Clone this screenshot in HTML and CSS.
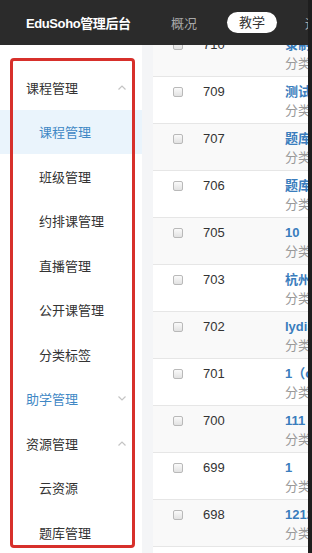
FILE: index.html
```html
<!DOCTYPE html>
<html lang="zh">
<head>
<meta charset="utf-8">
<link rel="stylesheet" href="styles.css">
</head>
<body>
<div class="app">
  <header class="topbar">
    <div class="brand">EduSoho管理后台</div>
    <nav class="nav">
      <span class="nav-item">概况</span>
      <span class="nav-item active">教学</span>
      <span class="nav-item">运营</span>
    </nav>
  </header>
  <div class="layout">
    <aside class="sidebar">
      <div class="group open">课程管理<svg class="chev" viewBox="0 0 8 5"><polyline points="0.5,4.5 4,1 7.5,4.5"/></svg></div>
      <div class="item active">课程管理</div>
      <div class="item">班级管理</div>
      <div class="item">约排课管理</div>
      <div class="item">直播管理</div>
      <div class="item">公开课管理</div>
      <div class="item">分类标签</div>
      <div class="group blue">助学管理<svg class="chev" viewBox="0 0 8 5"><polyline points="0.5,0.5 4,4 7.5,0.5"/></svg></div>
      <div class="group open">资源管理<svg class="chev" viewBox="0 0 8 5"><polyline points="0.5,4.5 4,1 7.5,4.5"/></svg></div>
      <div class="item">云资源</div>
      <div class="item">题库管理</div>
      <div class="highlight"></div>
    </aside>
    <div class="gutter"></div>
    <main class="content">
      <div class="row alt"><span class="cb"></span><span class="num">710</span><div class="title"><b>录制课程</b><span>分类：</span></div></div>
      <div class="row"><span class="cb"></span><span class="num">709</span><div class="title"><b>测试课程</b><span>分类：</span></div></div>
      <div class="row alt"><span class="cb"></span><span class="num">707</span><div class="title"><b>题库练习</b><span>分类：</span></div></div>
      <div class="row"><span class="cb"></span><span class="num">706</span><div class="title"><b>题库测试</b><span>分类：</span></div></div>
      <div class="row alt"><span class="cb"></span><span class="num">705</span><div class="title"><b>10</b><span>分类：</span></div></div>
      <div class="row"><span class="cb"></span><span class="num">703</span><div class="title"><b>杭州课程</b><span>分类：</span></div></div>
      <div class="row alt"><span class="cb"></span><span class="num">702</span><div class="title"><b>lydia</b><span>分类：</span></div></div>
      <div class="row"><span class="cb"></span><span class="num">701</span><div class="title"><b>1（copy）</b><span>分类：</span></div></div>
      <div class="row alt"><span class="cb"></span><span class="num">700</span><div class="title"><b>111</b><span>分类：</span></div></div>
      <div class="row"><span class="cb"></span><span class="num">699</span><div class="title"><b>1</b><span>分类：</span></div></div>
      <div class="row alt"><span class="cb"></span><span class="num">698</span><div class="title"><b>1212</b><span>分类：</span></div></div>
      <div class="row"><span class="cb"></span><span class="num">697</span><div class="title"><b>test</b><span>分类：</span></div></div>
    </main>
  </div>
</div>
</body>
</html>
```

FILE: styles.css
```css
* { box-sizing: border-box; }
html, body {
  margin: 0;
  padding: 0;
  width: 312px;
  height: 553px;
  overflow: hidden;
  background: #1e1e1e;
  font-family: "Liberation Sans", "Noto Sans CJK SC", sans-serif;
}
.app {
  position: relative;
  width: 308px;
  height: 553px;
  overflow: hidden;
  background: #fff;
}
.topbar {
  position: absolute;
  top: 0;
  left: 0;
  right: 0;
  height: 45px;
  background: #2b2b2b;
  display: flex;
  align-items: center;
  padding-left: 26px;
  z-index: 5;
  white-space: nowrap;
}
.brand {
  color: #fff;
  font-weight: bold;
  font-size: 13px;
  letter-spacing: -0.4px;
  width: 145px;
  flex: none;
}
.nav {
  display: flex;
  align-items: center;
}
.nav-item {
  font-size: 13px;
  color: #a8a8a8;
  margin-right: 32px;
}
.nav-item.active {
  background: #fff;
  color: #333;
  border-radius: 11px;
  width: 50px;
  height: 21px;
  line-height: 21px;
  text-align: center;
  margin-left: -2px;
  margin-right: 28px;
}
.layout {
  display: flex;
  height: 553px;
}
.sidebar {
  position: relative;
  width: 142px;
  flex: none;
  background: #fff;
  padding-top: 65px;
}
.group, .item {
  height: 44.5px;
  display: flex;
  align-items: center;
  font-size: 13px;
  color: #333;
  white-space: nowrap;
}
.group {
  padding-left: 26px;
  justify-content: space-between;
  padding-right: 16px;
}
.group.blue { color: #3f88c5; }
.item { padding-left: 39px; }
.item.active {
  background: #eaf4fc;
  color: #3f88c5;
}
.chev {
  width: 8px;
  height: 5px;
  fill: none;
  stroke: #c4c4c4;
  stroke-width: 1.2;
}
.highlight {
  position: absolute;
  left: 10px;
  top: 58px;
  width: 125px;
  height: 490px;
  border: 3px solid #d7302b;
  border-radius: 4px;
  pointer-events: none;
}
.gutter {
  width: 11px;
  flex: none;
  background: #f4f5f7;
}
.content {
  flex: 1;
  min-width: 0;
  padding-top: 30px;
  background: #fff;
}
.row {
  height: 47px;
  display: flex;
  align-items: flex-start;
  border-bottom: 1px solid #e6e6e6;
  padding-top: 6px;
  white-space: nowrap;
  overflow: hidden;
}
.row.alt { background: #f9f9f9; }
.cb {
  width: 10px;
  height: 10px;
  margin: 4px 0 0 20px;
  border: 1px solid #b9b9b9;
  border-radius: 2px;
  background: linear-gradient(#fafafa, #e2e2e2);
  flex: none;
}
.num {
  font-size: 13px;
  color: #333;
  margin-left: 20px;
  width: 82px;
  line-height: 18px;
  flex: none;
}
.title {
  display: flex;
  flex-direction: column;
  line-height: 18px;
  font-size: 13px;
}
.title b {
  color: #3a7dbd;
  font-weight: bold;
}
.title span {
  color: #999;
  margin-top: 1px;
}
```
